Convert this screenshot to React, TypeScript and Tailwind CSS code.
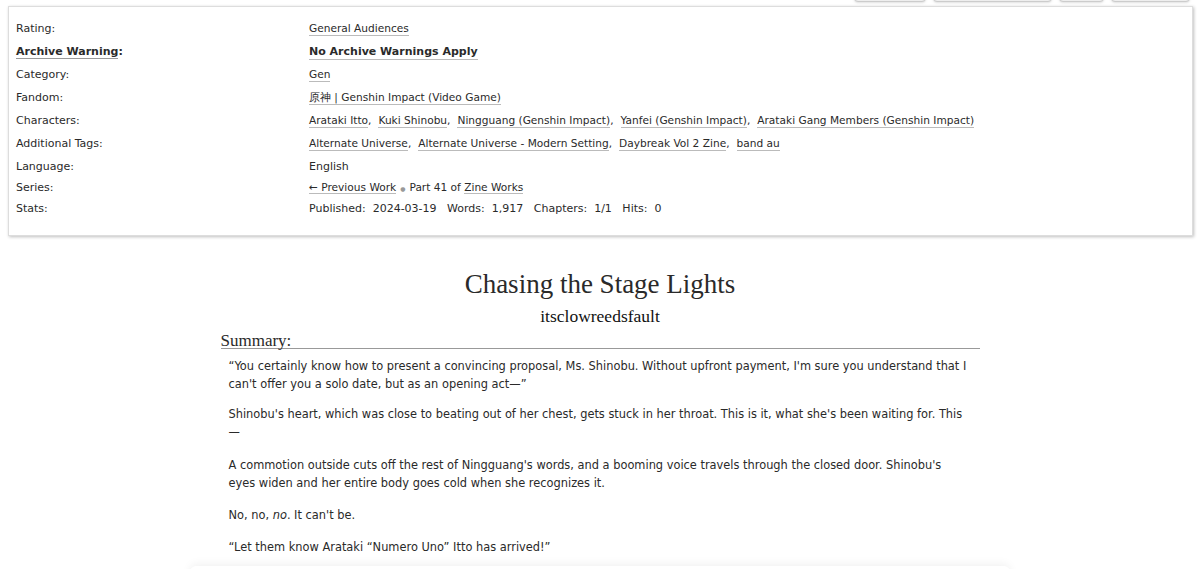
import React from "react";

const sans = "font-['Lucida_Grande','DejaVu_Sans',Verdana,sans-serif]";
const serif = "font-['Georgia','Liberation_Serif',serif]";

type Row = { label: string; strong?: boolean; values?: string[]; plain?: React.ReactNode; tall?: boolean };

const rows: Row[] = [
  { label: "Rating:", values: ["General Audiences"], tall: true },
  { label: "Archive Warning:", strong: true, values: ["No Archive Warnings Apply"], tall: true },
  { label: "Category:", values: ["Gen"], tall: true },
  { label: "Fandom:", values: ["原神 | Genshin Impact (Video Game)"], tall: true },
  {
    label: "Characters:",
    values: [
      "Arataki Itto",
      "Kuki Shinobu",
      "Ningguang (Genshin Impact)",
      "Yanfei (Genshin Impact)",
      "Arataki Gang Members (Genshin Impact)",
    ],
    tall: true,
  },
  {
    label: "Additional Tags:",
    values: ["Alternate Universe", "Alternate Universe - Modern Setting", "Daybreak Vol 2 Zine", "band au"],
    tall: true,
  },
  { label: "Language:", plain: "English" },
  {
    label: "Series:",
    plain: (
      <span className="text-[10.6px]">
        <a className="border-b border-[#bbb]">← Previous Work</a>
        <span className="mx-[4px] text-[6px] align-middle text-[#999]">●</span>Part 41 of{" "}
        <a className="border-b border-[#bbb]">Zine Works</a>
      </span>
    ),
  },
  {
    label: "Stats:",
    plain: (
      <span className="whitespace-pre">Published:  2024-03-19   Words:  1,917   Chapters:  1/1   Hits:  0</span>
    ),
  },
];

function Tags({ values, strong }: { values: string[]; strong?: boolean }) {
  return (
    <span className={strong ? "font-bold" : "text-[10.6px]"}>
      {values.map((v, i) => (
        <span key={v}>
          <a className="border-b border-[#bbb] pb-px">{v}</a>
          {i < values.length - 1 && <span className="mr-[7px]">,</span>}
        </span>
      ))}
    </span>
  );
}

export default function App() {
  return (
    <div className={`relative h-[569px] overflow-hidden bg-white ${sans} text-[11px] text-[#2a2a2a]`}>
      {/* cut-off buttons at top */}
      <div className="absolute right-[10px] top-[-12px] flex gap-[7px]">
        <div className="h-[14px] w-[72px] rounded-[4px] border border-[#ccc] bg-[#eee] shadow-sm" />
        <div className="h-[14px] w-[119px] rounded-[4px] border border-[#ccc] bg-[#eee] shadow-sm" />
        <div className="h-[14px] w-[45px] rounded-[4px] border border-[#ccc] bg-[#eee] shadow-sm" />
        <div className="h-[14px] w-[79px] rounded-[4px] border border-[#ccc] bg-[#eee] shadow-sm" />
      </div>

      <div className="ml-[8px] mr-[7px] pt-[6px]">
        <div className="border border-[#ddd] shadow-[1px_1px_3px_rgba(0,0,0,0.25)] pl-[7px] pt-[14px] pb-[13px]">
          {rows.map((r) => (
            <div key={r.label} className={`flex ${r.tall ? "h-[23px]" : "h-[21px]"}`}>
              <div className="w-[293px] shrink-0">
                {r.strong ? (
                  <a className="border-b border-[#999] font-bold">{r.label.replace(":", "")}</a>
                ) : (
                  r.label.replace(":", "")
                )}
                {r.strong ? <span className="font-bold">:</span> : ":"}
              </div>
              <div>{r.values ? <Tags values={r.values} strong={r.strong} /> : r.plain}</div>
            </div>
          ))}
        </div>
      </div>

      <div className="mx-auto mt-[32px] w-[759px]">
        <h2 className={`${serif} text-center text-[27px] leading-[32px] text-[#2a2a2a]`}>Chasing the Stage Lights</h2>
        <div className={`${serif} mt-[6px] text-center text-[17.5px] leading-[20px] text-[#111]`}>itsclowreedsfault</div>
        <div className={`${serif} mt-[8px] border-b border-[#999] text-[17px] leading-[14px] text-[#2a2a2a]`}>Summary:</div>
        <div className="ml-[8px] mt-[8px] text-[11.4px] leading-[18px] text-[#2a2a2a]">
          <p>
            “You certainly know how to present a convincing proposal, Ms. Shinobu. Without upfront payment, I'm sure you
            understand that I <br />can't offer you a solo date, but as an opening act—”
          </p>
          <p className="mt-[12px]">
            Shinobu's heart, which was close to beating out of her chest, gets stuck in her throat. This is it, what
            she's been waiting for. This <br />—
          </p>
          <p className="mt-[15px]">
            A commotion outside cuts off the rest of Ningguang's words, and a booming voice travels through the closed
            door. Shinobu's <br />eyes widen and her entire body goes cold when she recognizes it.
          </p>
          <p className="mt-[14px]">
            No, no, <em>no</em>. It can't be.
          </p>
          <p className="mt-[14px]">“Let them know Arataki “Numero Uno” Itto has arrived!”</p>
        </div>
      </div>

      {/* next box peeking in at the bottom */}
      <div className="absolute left-[190px] right-[190px] top-[566px] h-[40px] rounded-[6px] bg-white shadow-[0_-2px_10px_rgba(0,0,0,0.06)]" />
    </div>
  );
}
